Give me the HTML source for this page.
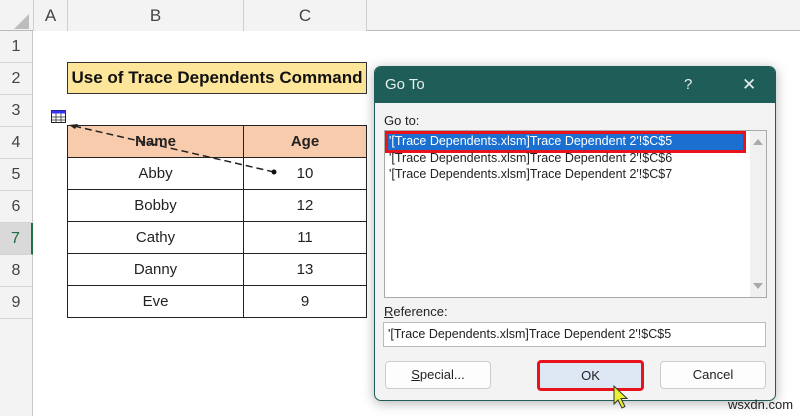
<!DOCTYPE html>
<html><head><style>
*{margin:0;padding:0;box-sizing:border-box}
body{width:800px;height:416px;overflow:hidden;background:#fff;font-family:"Liberation Sans",sans-serif;position:relative}
.a{position:absolute}
.hdr{background:#f3f3f3;color:#444;font-size:17px;text-align:center}
.rh{left:0;width:33px;height:32px;line-height:32px;border-bottom:1px solid #d4d4d4;border-right:1px solid #c8c8c8;font-size:16px}
.cell{border:1px solid #222;text-align:center;font-size:15px;color:#222}
.dt{font-size:12px;color:#222;white-space:nowrap}
.btn{background:#fdfdfd;border:1px solid #ccc;border-radius:4px;text-align:center;font-size:13px;line-height:26px;color:#222}
.r{display:flex;height:33px;margin-top:-1px}
</style></head><body>
<div class="a hdr" style="left:0;top:0;width:800px;height:31px;border-bottom:1px solid #bbb"></div>
<div class="a" style="left:14px;top:14px;width:0;height:0;border-left:15px solid transparent;border-bottom:15px solid #bdbdbd"></div>
<div class="a hdr" style="left:33px;top:0;width:34px;height:31px;line-height:31px;border-left:1px solid #d0d0d0">A</div>
<div class="a hdr" style="left:67px;top:0;width:176px;height:31px;line-height:31px;border-left:1px solid #d0d0d0">B</div>
<div class="a hdr" style="left:243px;top:0;width:124px;height:31px;line-height:31px;border-left:1px solid #d0d0d0;border-right:1px solid #d0d0d0">C</div>
<div class="a hdr" style="left:0;top:31px;width:33px;height:385px;border-right:1px solid #c8c8c8"></div>
<div class="a hdr rh" style="top:31px">1</div>
<div class="a hdr rh" style="top:63px">2</div>
<div class="a hdr rh" style="top:95px">3</div>
<div class="a hdr rh" style="top:127px">4</div>
<div class="a hdr rh" style="top:159px">5</div>
<div class="a hdr rh" style="top:191px">6</div>
<div class="a hdr rh" style="top:223px;background:#d9d9d9;color:#1e6b3e;border-right:2px solid #1e7145">7</div>
<div class="a hdr rh" style="top:255px">8</div>
<div class="a hdr rh" style="top:287px">9</div>
<div class="a" style="left:67px;top:62px;width:300px;height:32px;background:#fde59a;border:1px solid #333;font-weight:bold;font-size:17px;line-height:30px;text-align:center;color:#111">Use of Trace Dependents Command</div>
<div class="a" style="left:67px;top:125px;width:300px">
<div style="display:flex;background:#f8cbad;height:33px"><div class="cell" style="width:177px;line-height:31px;font-weight:bold">Name</div><div class="cell" style="width:124px;margin-left:-1px;line-height:31px;font-weight:bold">Age</div></div>
<div class="r"><div class="cell" style="width:177px;line-height:31px">Abby</div><div class="cell" style="width:124px;margin-left:-1px;line-height:31px">10</div></div>
<div class="r"><div class="cell" style="width:177px;line-height:31px">Bobby</div><div class="cell" style="width:124px;margin-left:-1px;line-height:31px">12</div></div>
<div class="r"><div class="cell" style="width:177px;line-height:31px">Cathy</div><div class="cell" style="width:124px;margin-left:-1px;line-height:31px">11</div></div>
<div class="r"><div class="cell" style="width:177px;line-height:31px">Danny</div><div class="cell" style="width:124px;margin-left:-1px;line-height:31px">13</div></div>
<div class="r"><div class="cell" style="width:177px;line-height:31px">Eve</div><div class="cell" style="width:124px;margin-left:-1px;line-height:31px">9</div></div>
</div>
<svg class="a" style="left:0;top:0" width="370" height="200">
<rect x="51.5" y="110.5" width="14" height="12" fill="#fff" stroke="#222"/>
<rect x="51.5" y="110.5" width="14" height="3" fill="#33f"/>
<path d="M52 117h13M52 120h13M56 113v9M61 113v9" stroke="#555"/>
<line x1="274" y1="172" x2="74" y2="126" stroke="#222" stroke-width="1.5" stroke-dasharray="7,4"/>
<path d="M69 125l9 -1l-3 5z" fill="#222"/>
<circle cx="274" cy="172" r="2.5" fill="#111"/>
</svg>
<div class="a" style="left:374px;top:66px;width:402px;height:335px;background:#f3f3f3;border:1px solid #1e5e56;border-radius:7px;box-shadow:0 2px 12px rgba(0,0,0,.3);overflow:hidden">
<div style="height:36px;background:#1f5e58;color:#e8eeed;font-size:15px;line-height:36px;padding-left:10px;position:relative">Go To<span style="position:absolute;left:309px">?</span><span style="position:absolute;left:367px;font-size:17px">✕</span></div>
</div>
<div class="a dt" style="left:384px;top:113px;font-size:13px">Go to:</div>
<div class="a" style="left:384px;top:130px;width:383px;height:168px;background:#fff;border:1px solid #aaa"></div>
<div class="a" style="left:750px;top:131px;width:16px;height:166px;background:#f0f0f0"></div>
<div class="a" style="left:753px;top:139px;width:0;height:0;border-left:5px solid transparent;border-right:5px solid transparent;border-bottom:6px solid #aaa"></div>
<div class="a" style="left:753px;top:283px;width:0;height:0;border-left:5px solid transparent;border-right:5px solid transparent;border-top:6px solid #aaa"></div>
<div class="a" style="left:385px;top:131px;width:361px;height:22px;border:3px solid #e8131b;background:#1a6fd0"></div>
<div class="a dt" style="left:389px;top:134px;color:#fff;font-size:12.5px">'[Trace Dependents.xlsm]Trace Dependent 2'!$C$5</div>
<div class="a dt" style="left:389px;top:151px;font-size:12.5px">'[Trace Dependents.xlsm]Trace Dependent 2'!$C$6</div>
<div class="a dt" style="left:389px;top:167px;font-size:12.5px">'[Trace Dependents.xlsm]Trace Dependent 2'!$C$7</div>
<div class="a dt" style="left:384px;top:304px;font-size:13px"><u>R</u>eference:</div>
<div class="a dt" style="left:383px;top:322px;width:383px;height:25px;background:#fff;border:1px solid #bbb;line-height:23px;padding-left:4px;font-size:12.5px">'[Trace Dependents.xlsm]Trace Dependent 2'!$C$5</div>
<div class="a btn" style="left:385px;top:361px;width:106px;height:28px"><u>S</u>pecial...</div>
<div class="a btn" style="left:537px;top:360px;width:107px;height:31px;border:3px solid #e8131b;background:#dde8f4;line-height:25px">OK</div>
<div class="a btn" style="left:660px;top:361px;width:106px;height:28px">Cancel</div>
<svg class="a" style="left:612px;top:384px" width="20" height="26"><path d="M2 2v18l4-4 4 8 3-1.5-4-8h6z" fill="#e8f030" stroke="#333" stroke-width="1"/></svg>
<div class="a" style="left:728px;top:397px;font-size:13px;color:#222">wsxdn.com</div>
</body></html>
